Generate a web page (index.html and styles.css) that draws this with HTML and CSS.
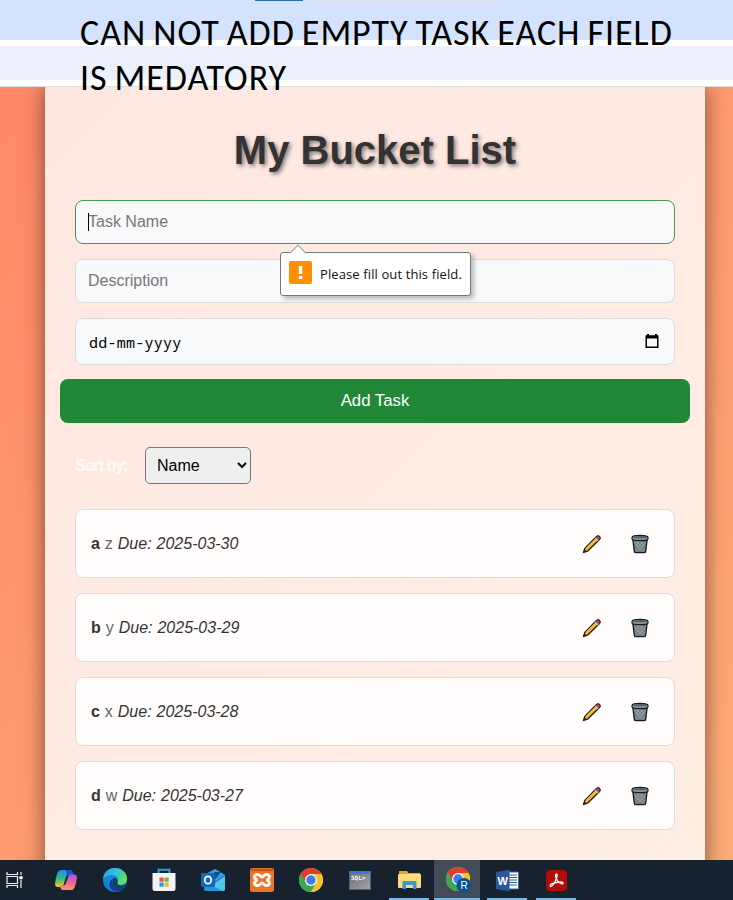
FILE: index.html
```html
<!DOCTYPE html>
<html lang="en">
<head>
<meta charset="utf-8">
<title>My Bucket List</title>
<link rel="stylesheet" href="styles.css">
</head>
<body>
<svg class="defs" aria-hidden="true">
  <defs>
    <linearGradient id="cpA" x1="0" y1="0" x2="0" y2="1"><stop offset="0" stop-color="#1d8fe8"/><stop offset=".5" stop-color="#2fb98d"/><stop offset="1" stop-color="#f0d21f"/></linearGradient>
    <linearGradient id="cpB" x1="0" y1="0" x2="0" y2="1"><stop offset="0" stop-color="#a455e8"/><stop offset=".5" stop-color="#f0609a"/><stop offset="1" stop-color="#ff9a57"/></linearGradient>
    <linearGradient id="edA" x1="0" y1="0" x2="1" y2=".5"><stop offset="0" stop-color="#1f9fe0"/><stop offset=".55" stop-color="#35c3dc"/><stop offset="1" stop-color="#5fe05a"/></linearGradient>
    <linearGradient id="edB" x1="0" y1="0" x2="0" y2="1"><stop offset="0" stop-color="#1b93dc"/><stop offset="1" stop-color="#1576d0"/></linearGradient>
    <linearGradient id="sql" x1="0" y1="0" x2="1" y2="1"><stop offset="0" stop-color="#66696e"/><stop offset="1" stop-color="#a5a7aa"/></linearGradient>
    <symbol id="pencil" viewBox="0 0 20 20">
      <path d="M1.500 18.500 2.800 14.500 14.500 2.500Q16 1.200 17.500 2.500 18.800 4 17.500 5.500L5.500 17.200Z" fill="#f5b52c" stroke="#241a12" stroke-width="1.300" stroke-linejoin="round"/>
      <path d="m13.600 3.500 1.200-1.200Q16 1.200 17.400 2.600 18.700 4 17.700 5.200L16.500 6.400Z" fill="#cb4659" stroke="#241a12" stroke-width=".8"/>
      <path d="m12.600 4.500 1-1 3 3-1 1Z" fill="#c9c4c4"/>
      <path d="M4 14.400 13 5.400" stroke="#ffd75a" stroke-width="1"/>
      <path d="m1.400 18.600 1-3.400 2.500 2.500Z" fill="#2a201a"/>
    </symbol>
    <symbol id="trash" viewBox="0 0 20 20">
      <path d="M2.700 4 4.300 17.300Q4.500 18.700 6.200 18.700H13.800Q15.500 18.700 15.700 17.300L17.300 4Z" fill="#6f7c83" stroke="#17191b" stroke-width="1.300"/>
      <path d="m4 8 9 9.500M5.500 6l9.500 10M9 6l6.500 7M16 8l-9 9.500M14.500 6 5 16M11 6l-6.500 7" stroke="#aab5ba" stroke-width=".7"/>
      <path d="M2 3.500Q2 1.300 10 1.300T18 3.500V5Q18 6.700 10 6.700T2 5Z" fill="#84929a" stroke="#17191b" stroke-width="1.200"/>
      <ellipse cx="10" cy="3.200" rx="6.500" ry="1.100" fill="#53616a"/>
    </symbol>
    <symbol id="chrome" viewBox="0 0 24 24">
      <circle cx="12" cy="12" r="12" fill="#f5c32c"/>
      <path d="M1.6 6A12 12 0 0 1 22.4 6H12L6.8 15Z" fill="#dd3f31"/>
      <path d="M1.6 6A12 12 0 0 0 12 24L17.2 15 6.8 15Z" fill="#3aa853"/>
      <path d="M22.4 6A12 12 0 0 1 12 24L17.2 15 17.2 9 12 6Z" fill="#f5c32c"/>
      <circle cx="12" cy="12" r="6" fill="#f5f7fa"/><circle cx="12" cy="12" r="4.7" fill="#3f7ee6"/>
    </symbol>
  </defs>
</svg>

<header class="browser">
  <div class="tabs"><span class="progress"></span><span class="progress-rest"></span></div>
  <div class="address"></div>
  <p class="note">CAN NOT ADD EMPTY TASK EACH FIELD<br>IS MEDATORY</p>
</header>

<main class="page">
  <section class="card">
    <h1>My Bucket List</h1>
    <form class="form" novalidate>
      <div class="field active"><input type="text" placeholder="Task Name" aria-label="Task Name"><span class="caret"></span>
        <div class="tip"><span class="tip-arrow"></span><span class="tip-icon"><svg width="23" height="23" viewBox="0 0 23 23"><path d="M9.800 5h3.500v8H9.800zM9.800 15h3.500v3H9.800z" fill="#fff"/></svg></span><span class="tip-text">Please fill out this field.</span></div>
      </div>
      <div class="field"><input type="text" placeholder="Description" aria-label="Description"></div>
      <div class="field date"><span>dd-mm-yyyy</span>
        <svg width="14" height="14" viewBox="0 0 14 14"><path d="M2 0h2v1.200h6V0h2v1.200h1.500V14H.5V1.200H2zM2 4.500v8h10v-8z" fill="#000" fill-rule="evenodd"/></svg>
      </div>
      <button class="add" type="button">Add Task</button>
    </form>
    <div class="sort"><label for="sort">Sort by:</label><select id="sort"><option>Name</option></select></div>
    <ul class="tasks">
      <li><p><strong>a</strong> <span>z</span> <em>Due: 2025-03-30</em></p><svg class="ico"><use href="#pencil"/></svg><svg class="ico"><use href="#trash"/></svg></li>
      <li><p><strong>b</strong> <span>y</span> <em>Due: 2025-03-29</em></p><svg class="ico"><use href="#pencil"/></svg><svg class="ico"><use href="#trash"/></svg></li>
      <li><p><strong>c</strong> <span>x</span> <em>Due: 2025-03-28</em></p><svg class="ico"><use href="#pencil"/></svg><svg class="ico"><use href="#trash"/></svg></li>
      <li><p><strong>d</strong> <span>w</span> <em>Due: 2025-03-27</em></p><svg class="ico"><use href="#pencil"/></svg><svg class="ico"><use href="#trash"/></svg></li>
    </ul>
  </section>
</main>

<footer class="taskbar">
  <div class="app view"><svg width="18" height="18" viewBox="0 0 18 18" fill="none" stroke="#eef1f3" stroke-width="1.200"><path d="M1 1v2.500h10.500V1M1 17v-2.500h10.500V17M1 5.500h10.500v7H1zM15 1v3M15 9v8"/><path d="M13.400 5.200h3.200v3h-3.200z" fill="#fff" stroke="none"/></svg></div>
  <div class="app"><svg width="24" height="24" viewBox="0 0 24 24"><path d="M7 2h9q2 0 2.600 2l1 3h-5q-2 0-2.600 2l-2.500 8q-.6 2-2.600 2H4q-3 0-3-3Q1.500 10 3.500 4.600 4.500 2 7 2Z" fill="url(#cpA)"/><path d="M12 2h4q2 0 2.600 2l1 3h-5q-1.500 0-2 1.500Z" fill="#1b54c4"/><path d="M17 22H9q-2 0-2.500-2l-.8-2.500h3.500q2 0 2.600-2l2.500-7Q15 6.500 17 6.500h3q3 0 3 3-.7 6-2.500 10Q19.500 22 17 22Z" fill="url(#cpB)"/></svg></div>
  <div class="app"><svg width="24" height="24" viewBox="0 0 24 24"><circle cx="12" cy="12" r="12" fill="url(#edB)"/><path d="M0 11C.5 4.500 5.500 0 12 0c7 0 12 5 12 10.500 0 4-2.700 6.500-6.500 6.500-3 0-4-1.500-3-2.800C17 11 13.500 7 9 7 4.500 7 1 9 0 11Z" fill="url(#edA)"/><path d="M9.500 11C7 16 12 21.500 20.700 20c.5 0 .8.100.4.600C15 26 6 23 6.500 16c.1-2 1.300-4 3-5Z" fill="#0c3f8d"/><path d="M14.600 14c-1.500 2.600 3 4.300 7.300 2.200.7-.2 1 .1.700.7-1 1.800-2.500 3.400-4.600 3.500-6 .5-10-4.500-8.500-9.400 1.500-2.200 5.700-.5 5.100 3Z" fill="#133d65"/></svg></div>
  <div class="app"><svg width="24" height="24" viewBox="0 0 24 24"><path d="M6.500 6V1.700h11V6" fill="none" stroke="#2d9be0" stroke-width="2"/><path d="M.5 5h23v15.500q0 2.500-2.500 2.500H3Q.5 23 .5 20.500Z" fill="#f2f3f5"/><path d="M7.500 9.500h4.200v4.200H7.500z" fill="#e4573d"/><path d="M12.500 9.500h4.200v4.200h-4.200z" fill="#7cb43a"/><path d="M7.500 14.500h4.200v4.200H7.500z" fill="#2d9be0"/><path d="M12.500 14.500h4.200v4.200h-4.200z" fill="#f3b62c"/></svg></div>
  <div class="app"><svg width="26" height="24" viewBox="0 0 26 24"><path d="m4 7 11-6 10 6v14q0 2-2 2H6q-2 0-2-2Z" fill="#1a72c0"/><path d="M8 4.800 15 1l10 6-9 6Z" fill="#3a9ddc"/><path d="m9 19 16-11v13q0 2-2 2H7Z" fill="#50c5ee"/><path d="m6 15 17 8H6q-2 0-2-2Z" fill="#2794da"/><path d="M14 4h7l-7 9Z" fill="#164c90"/><rect x="1" y="5" width="14" height="14" rx="1.500" fill="#1268ba"/><ellipse cx="8" cy="12" rx="3.200" ry="3.700" fill="none" stroke="#fff" stroke-width="1.700"/></svg></div>
  <div class="app"><svg width="24" height="24" viewBox="0 0 24 24"><rect width="24" height="24" rx="2.500" fill="#e87529"/><path d="M1 1h22v2H1z" fill="#bf5715"/><path d="M8 6.500c-4.500-.5-4.500 4.500-.5 5.500-4 1-4 6 .5 5.500 2 0 2.500-2.500 4-2.500s2 2.500 4 2.500c4.500.5 4.500-4.500.5-5.500 4-1 4-6-.5-5.500-2 0-2.500 2.500-4 2.500S10 6.500 8 6.500Z" fill="none" stroke="#fff7ec" stroke-width="3"/></svg></div>
  <div class="app"><svg width="24" height="24"><use href="#chrome"/></svg></div>
  <div class="app"><svg width="22" height="19" viewBox="0 0 22 19"><path d="M.5.500h21v18H.5z" fill="url(#sql)" stroke="#3b5f9c"/><path d="M0 0h22v2.500H0z" fill="#3974cf"/><text class="sql" x="2" y="9">SQL&gt;</text></svg></div>
  <div class="app open"><svg width="23" height="20" viewBox="0 0 23 20"><path d="M1 1h8l1.500 2H22v15H1z" fill="#e6a825"/><path d="M1 4h21q1 0 1 1v12q0 1-1 1H1q-1 0-1-1V5q0-1 1-1Z" fill="#fbdc78"/><path d="M4.500 19v-7q0-1 1-1h12q1 0 1 1v7H15v-4H8v4Z" fill="#3f95d0"/></svg></div>
  <div class="app open current"><svg width="26" height="26" viewBox="0 0 26 26"><use href="#chrome" width="24" height="24"/><circle cx="18" cy="18.500" r="7.500" fill="#0d5290"/><text class="badge" x="18" y="22">R</text></svg></div>
  <div class="app open"><svg width="23" height="23" viewBox="0 0 23 23"><path d="M11 3h11.500v17H11z" fill="#fff" stroke="#3a69b4"/><path d="M13 6h8M13 8.500h8M13 11h8M13 13.500h8M13 16h8" stroke="#2b579a" stroke-width="1"/><path d="M0 3 13.500.500v22L0 20Z" fill="#2b579a"/><text class="word" x="6.700" y="15.500">W</text></svg></div>
  <div class="app open"><svg width="21" height="21" viewBox="0 0 21 21"><rect width="21" height="21" rx="4" fill="#b30b05"/><path d="M4.500 16.500C3 15 7 12 15 12c3 0 2.500 2 .5 1.800C13 13.300 9.500 9 9.500 5.500c0-2 2-2 1.700.2C10.700 9 7 16.800 4.500 16.500Z" fill="none" stroke="#fff" stroke-width="1.300"/></svg></div>
</footer>
</body>
</html>
```
FILE: styles.css
```css
* { box-sizing: border-box; }
body { margin: 0; width: 733px; height: 900px; overflow: hidden; font-family: Arial, "Liberation Sans", sans-serif; font-size: 16px; display: flex; flex-direction: column; }
.defs { position: absolute; width: 0; height: 0; }
.browser { position: relative; z-index: 2; height: 87px; background: #fff; border-bottom: 1px solid #dedfe1; flex: none; }
.tabs { height: 40px; background: #d3e3fd; display: flex; padding-left: 255px; }
.progress { width: 48px; height: 1px; background: #2a6ea3; }
.progress-rest { width: 193px; height: 1px; background: #dce1ec; }
.address { height: 34px; margin-top: 6px; background: #ecf0fa; }
.note { position: absolute; left: 80px; top: 11px; margin: 0; font: 36px/45px Carlito, "Noto Sans", sans-serif; color: #000; white-space: nowrap; letter-spacing: .95px; word-spacing: -2px; }
.page { height: 773px; flex: none; padding: 0 28px 0 45px; overflow: hidden; background: linear-gradient(135deg, #ff8967, #feac77); }
.card { height: 790px; padding: 0 30px; box-shadow: 0 0 20px rgba(0, 0, 0, .5); background: linear-gradient(135deg, #ffe7e1, #ffeee4); }
h1 { margin: 0; padding-top: 40px; height: 113px; font-size: 40px; line-height: 46px; text-align: center; color: #333; text-shadow: 2px 2px 4px rgba(0, 0, 0, .5); }
.form { display: flex; flex-direction: column; gap: 15px; }
.field { position: relative; height: 44px; border: 1px solid #dcdcde; border-radius: 8px; background: #f8f9fb; display: flex; align-items: center; padding: 0 12px; }
.active { border-color: #45984f; z-index: 1; }
.field input { width: 100%; padding: 0; border: 0; outline: 0; background: none; font: 16px Arial, "Liberation Sans", sans-serif; }
.field input::placeholder { color: #777; }
.caret { position: absolute; left: 12px; top: 12px; width: 1px; height: 18px; background: #000; }
.date { height: 47px; justify-content: space-between; padding: 0 15px 0 13px; font: 15px "Noto Sans Mono", "DejaVu Sans Mono", monospace; }
.date span { letter-spacing: .25px; }
.date svg { margin-top: -2px; }
.add { margin: -1px -15px 0; height: 44px; padding: 0; border: 0; border-radius: 8px; background: #218838; color: #fff; font: 16.800px Arial, "Liberation Sans", sans-serif; }
.tip { position: absolute; left: 204px; top: 51px; width: 191px; height: 44px; padding: 0 8px; display: flex; align-items: center; gap: 8px; background: #fff; border: 1px solid #777; border-radius: 3px; box-shadow: 3px 3px 4px rgba(0, 0, 0, .25); }
.tip-arrow { position: absolute; left: 11px; top: -6px; width: 12px; height: 12px; background: #fff; border: solid #999; border-width: 1px 0 0 1px; transform: rotate(45deg); }
.tip-icon { width: 23px; height: 23px; margin-top: -3px; border-radius: 2px; background: #ff8f00; position: relative; }
.tip-icon svg { display: block; }
.tip-text { font: 13px "Open Sans", sans-serif; letter-spacing: .11px; white-space: nowrap; color: #111; }
.sort { display: flex; align-items: center; margin-top: 24px; height: 37px; }
.sort label { width: 70px; color: #fffaf7; font-weight: bold; letter-spacing: -1px; }
.sort select { width: 106px; height: 37px; padding: 8px 8px 8px 7px; font: 16px Arial, "Liberation Sans", sans-serif; border: 1px solid #767676; border-radius: 5px; background: #efefef; color: #000; }
.tasks { list-style: none; margin: 25px 0 0; padding: 0; display: flex; flex-direction: column; gap: 15px; }
.tasks li { height: 69px; border: 1px solid #dddbdc; border-radius: 8px; background: #fffcfb; display: flex; align-items: center; padding: 0 24px 0 15px; gap: 28px; }
.tasks p { flex: 1; margin: 0; color: #333; word-spacing: .5px; }
.tasks span { color: #666; }
.ico { width: 20px; height: 20px; }
.taskbar { height: 40px; flex: none; background: #18222e; display: flex; gap: 5px; }
.app { width: 44px; height: 40px; display: flex; align-items: center; justify-content: center; }
.view { width: 39px; padding-right: 9px; }
.open { background: linear-gradient(#76b9ed, #76b9ed) center bottom / 40px 2px no-repeat; }
.current { width: 46px; margin-left: -2px; background: linear-gradient(#76b9ed, #76b9ed) center bottom / 46px 2px no-repeat #434c56; }
.current svg { margin-left: 3px; }
.sql { font: bold 6px "DejaVu Sans Mono", monospace; fill: #fff; }
.badge { font: 10px Arial, "Liberation Sans", sans-serif; fill: #fff; text-anchor: middle; }
.word { font: bold 11px Arial, "Liberation Sans", sans-serif; fill: #fff; text-anchor: middle; }
```
